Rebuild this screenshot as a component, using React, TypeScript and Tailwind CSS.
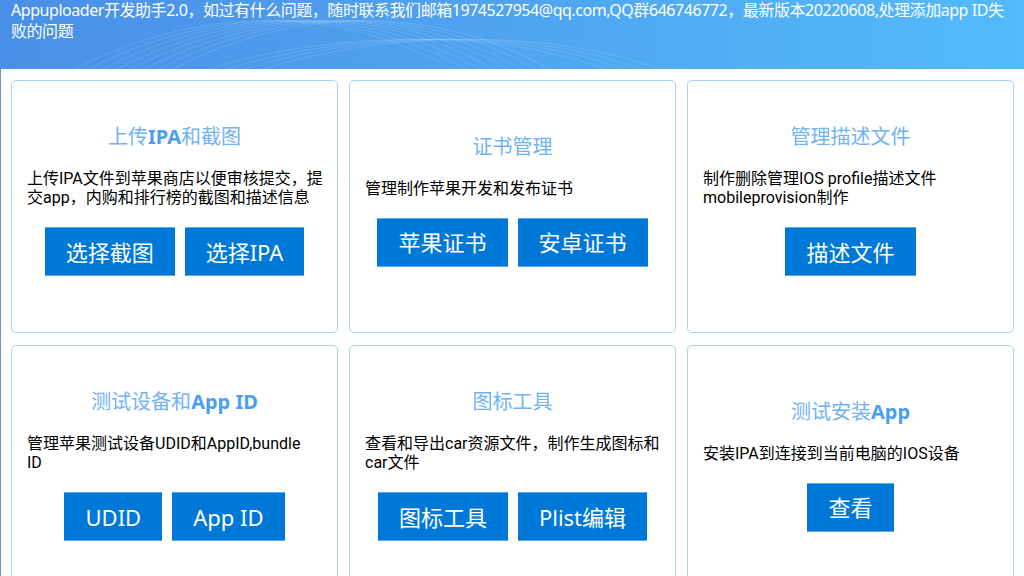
import React from 'react'

type Part = { t: string; b?: boolean }

interface CardProps {
  title: Part[]
  lines: string[]
  buttons: string[]
}

const font = { fontFamily: '"Noto Sans", "Noto Sans CJK SC", sans-serif' }

const Waves = () => (
  <svg className="absolute inset-0 h-full w-full" viewBox="0 0 1024 69" preserveAspectRatio="none">
    <g fill="none" stroke="#ffffff" strokeOpacity="0.13" strokeWidth="1">
      {[0, 14, 28, 42, 56, 70, 84, 98].map((d) => (
        <path key={d} d={`M ${40 + d} 90 C ${160 + d} 10, ${330 + d} -10, ${470 + d} 80`} />
      ))}
      {[0, 18, 36, 54].map((d) => (
        <path key={'b' + d} d={`M ${180 + d} 80 C ${300 + d} 30, ${520 + d} 20, ${640 + d} 85`} />
      ))}
    </g>
  </svg>
)

const Card: React.FC<CardProps> = ({ title, lines, buttons }) => {
  return (
    <div className="flex h-[253px] flex-col justify-center rounded-[5px] border border-[#aad2f6] bg-white pb-3">
      <h2 className="text-center text-[20px] leading-[24px] text-[#72b3f2]">
        {title.map((p, i) =>
          p.b ? (
            <span key={i} className="font-bold text-[#4c9ef0]">{p.t}</span>
          ) : (
            <span key={i}>{p.t}</span>
          )
        )}
      </h2>
      <p className="mt-[20px] whitespace-nowrap pl-[15px] font-['Roboto','Noto_Sans_CJK_SC',sans-serif] text-[16px] leading-[19px] text-black">
        {lines.map((l, i) => (
          <span key={i} className="block">{l}</span>
        ))}
      </p>
      <div className="mt-[20px] flex justify-center gap-[10px]">
        {buttons.map((b) => (
          <button
            key={b}
            className="h-[49px] border-y border-[#5aa9ea] bg-[#0078d7] px-[21px] text-[22px] leading-none text-white"
          >
            {b}
          </button>
        ))}
      </div>
    </div>
  )
}

const cards: CardProps[] = [
  {
    title: [{ t: '上传' }, { t: 'IPA', b: true }, { t: '和截图' }],
    lines: ['上传IPA文件到苹果商店以便审核提交，提', '交app，内购和排行榜的截图和描述信息'],
    buttons: ['选择截图', '选择IPA'],
  },
  {
    title: [{ t: '证书管理' }],
    lines: ['管理制作苹果开发和发布证书'],
    buttons: ['苹果证书', '安卓证书'],
  },
  {
    title: [{ t: '管理描述文件' }],
    lines: ['制作删除管理IOS profile描述文件', 'mobileprovision制作'],
    buttons: ['描述文件'],
  },
  {
    title: [{ t: '测试设备和' }, { t: 'App ID', b: true }],
    lines: ['管理苹果测试设备UDID和AppID,bundle', 'ID'],
    buttons: ['UDID', 'App ID'],
  },
  {
    title: [{ t: '图标工具' }],
    lines: ['查看和导出car资源文件，制作生成图标和', 'car文件'],
    buttons: ['图标工具', 'Plist编辑'],
  },
  {
    title: [{ t: '测试安装' }, { t: 'App', b: true }],
    lines: ['安装IPA到连接到当前电脑的IOS设备'],
    buttons: ['查看'],
  },
]

export default function App() {
  return (
    <div className="h-[576px] w-[1024px] overflow-hidden bg-white" style={font}>
      <header className="relative h-[69px] bg-gradient-to-r from-[#4a8fe7] via-[#4fa4f0] to-[#53bbf9] px-[11px]">
        <Waves />
        <p className="relative text-[16px] leading-[21px] tracking-[-0.45px] text-white">
          <span className="block whitespace-nowrap">
            Appuploader开发助手2.0，如过有什么问题，随时联系我们邮箱1974527954@qq.com,QQ群646746772，最新版本20220608,处理添加app ID失
          </span>
          <span className="block">败的问题</span>
        </p>
      </header>
      <main className="grid h-[507px] grid-cols-3 content-start gap-x-[11px] gap-y-[12px] border-l border-[#7393b5] pl-[10px] pr-[10px] pt-[11px]">
        {cards.map((c, i) => (
          <Card key={i} {...c} />
        ))}
      </main>
    </div>
  )
}
